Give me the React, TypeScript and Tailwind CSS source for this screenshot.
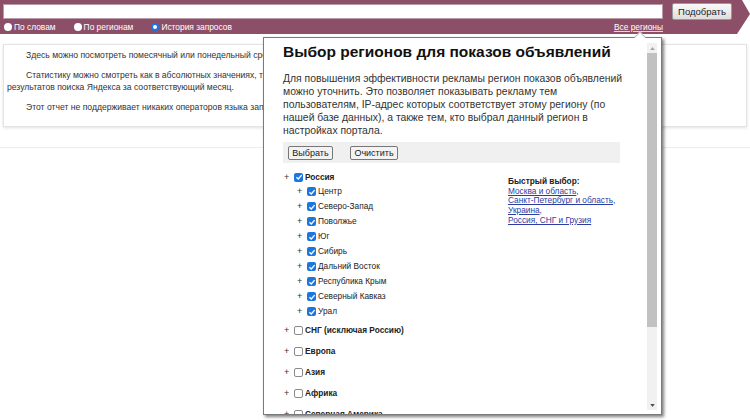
import React from "react";

const kids = [
  "Центр",
  "Северо-Запад",
  "Поволжье",
  "Юг",
  "Сибирь",
  "Дальний Восток",
  "Республика Крым",
  "Северный Кавказ",
  "Урал",
];
const tops = ["СНГ (исключая Россию)", "Европа", "Азия", "Африка", "Северная Америка"];

function Box({ checked }: { checked: boolean }) {
  return checked ? (
    <span className="w-[9px] h-[9px] rounded-[2px] bg-[#1b77e0] flex items-center justify-center shrink-0">
      <svg viewBox="0 0 10 10" className="w-[8px] h-[8px]">
        <path d="M1.8 5.2 L4.1 7.4 L8.3 2.6" stroke="white" strokeWidth="1.7" fill="none" />
      </svg>
    </span>
  ) : (
    <span className="w-[9px] h-[9px] rounded-[2px] border border-[#8a8a8a] bg-white shrink-0" />
  );
}

function Radio({ on, label }: { on?: boolean; label: string }) {
  return (
    <div className="flex items-center gap-[2px]">
      {on ? (
        <span className="w-[8px] h-[8px] rounded-full border-[2px] border-[#1a73e8] bg-white" />
      ) : (
        <span className="w-[8px] h-[8px] rounded-full bg-white" />
      )}
      <span>{label}</span>
    </div>
  );
}

function Plus() {
  return <span className="w-[10px] text-[9px] leading-none text-[#333]">+</span>;
}

export default function App() {
  return (
    <div className="relative w-[750px] h-[420px] bg-white overflow-hidden font-['Liberation_Sans',Arial,sans-serif] text-[#222]">
      {/* top bar */}
      <div className="h-[34px] bg-[#8d4f68] [clip-path:polygon(0_0,742px_0,750px_14px,737px_34px,0_34px)] flex flex-col">
        <div className="flex items-start pt-[3px]">
          <div className="ml-[3px] mt-[1px] w-[660px] h-[15px] bg-white border border-[#b99aa8]" />
          <button className="ml-[9px] w-[60px] h-[17px] rounded-[2px] border border-[#9a9a9a] bg-gradient-to-b from-[#fafafa] to-[#dedede] text-[9.5px] leading-[15px] text-[#222]">
            Подобрать
          </button>
        </div>
        <div className="flex items-center justify-between w-[663px] h-[13px] mt-[1px] pl-[4px] text-[8.4px] text-white">
          <div className="flex items-center gap-[18px]">
            <Radio label="По словам" />
            <Radio label="По регионам" />
            <Radio on label="История запросов" />
          </div>
          <span className="underline decoration-[#e8d6de]">Все регионы</span>
        </div>
      </div>

      {/* content panel */}
      <div className="mt-[10px] mx-[3px] h-[83px] border border-[#e3e3e3] shadow-[0_1px_3px_rgba(0,0,0,0.12)] px-[3px] pt-[4px] text-[8.6px] leading-[12px] text-[#333]">
        <p className="indent-[19px] mb-[8px]">
          Здесь можно посмотреть помесячный или понедельный срез статистики показов по запросу за последние два года.
        </p>
        <p className="indent-[19px] mb-[8px]">
          Статистику можно смотреть как в абсолютных значениях, так и в виде отношения числа показов по запросу к общему количеству показов
          <br />
          результатов поиска Яндекса за соответствующий месяц.
        </p>
        <p className="indent-[19px]">
          Этот отчет не поддерживает никаких операторов языка запросов, кроме минус-слов.
        </p>
      </div>
      <div className="mt-[20px] border-t border-[#ececec]" />

      {/* modal */}
      <div className="absolute left-[263px] top-[37px] w-[399px] h-[378px] bg-white border border-[#7a7a7a] shadow-[2px_2px_3px_rgba(0,0,0,0.5)] flex">
        <div className="absolute left-[372px] top-[-5px] w-[8px] h-[8px] bg-white border-l border-t border-[#bbb] rotate-45" />
        <div className="flex-1 overflow-hidden pl-[19px] pt-[5px]">
          <h1 className="text-[15.5px] leading-[18px] font-bold text-[#111] whitespace-nowrap">
            Выбор регионов для показов объявлений
          </h1>
          <p className="mt-[11px] text-[10.4px] leading-[13px] text-[#333] whitespace-nowrap">
            Для повышения эффективности рекламы регион показов объявлений
            <br />
            можно уточнить. Это позволяет показывать рекламу тем
            <br />
            пользователям, IP-адрес которых соответствует этому региону (по
            <br />
            нашей базе данных), а также тем, кто выбрал данный регион в
            <br />
            настройках портала.
          </p>
          <div className="mt-[5px] w-[337px] h-[21px] bg-[#f0f0f0] flex items-center pl-[5px] gap-[17px] text-[9px]">
            <button className="w-[45px] h-[14px] border border-[#777] rounded-[2px] bg-[#f3f3f3] leading-[12px]">Выбрать</button>
            <button className="w-[48px] h-[14px] border border-[#777] rounded-[2px] bg-[#f3f3f3] leading-[12px]">Очистить</button>
          </div>
          <div className="mt-[7px] flex text-[8.3px]">
            <div className="w-[224px] ml-[1px]">
              <div className="h-[14px] flex items-center">
                <Plus />
                <Box checked />
                <span className="ml-[2px] font-bold">Россия</span>
              </div>
              {kids.map((k) => (
                <div key={k} className="h-[15px] flex items-center pl-[13px]">
                  <Plus />
                  <Box checked />
                  <span className="ml-[2px]">{k}</span>
                </div>
              ))}
              <div className="h-[1px]" />
              {tops.map((t) => (
                <div key={t} className="h-[21px] flex items-center">
                  <Plus />
                  <Box checked={false} />
                  <span className="ml-[2px] font-bold">{t}</span>
                </div>
              ))}
            </div>
            <div className="mt-[7px] leading-[9.7px] text-[8.3px]">
              <div className="font-bold">Быстрый выбор:</div>
              <div className="text-[#2b3ca3]">
                <span className="underline">Москва и область</span>,
              </div>
              <div className="text-[#2b3ca3]">
                <span className="underline">Санкт-Петербург и область</span>,
              </div>
              <div className="text-[#2b3ca3]">
                <span className="underline">Украина</span>,
              </div>
              <div className="text-[#2b3ca3]">
                <span className="underline">Россия, СНГ и Грузия</span>
              </div>
            </div>
          </div>
        </div>
        {/* scrollbar */}
        <div className="w-[10px] mt-[5px] mb-[4px] mr-[4px] bg-[#f1f1f1] flex flex-col">
          <div className="h-[10px] flex items-center justify-center">
            <svg viewBox="0 0 6 4" className="w-[5px] h-[3px]">
              <path d="M0 4 L3 0 L6 4 Z" fill="#a3a3a3" />
            </svg>
          </div>
          <div className="h-[274px] bg-[#c1c1c1]" />
          <div className="flex-1" />
          <div className="h-[10px] flex items-center justify-center">
            <svg viewBox="0 0 6 4" className="w-[5px] h-[3px]">
              <path d="M0 0 L3 4 L6 0 Z" fill="#505050" />
            </svg>
          </div>
        </div>
      </div>
    </div>
  );
}
